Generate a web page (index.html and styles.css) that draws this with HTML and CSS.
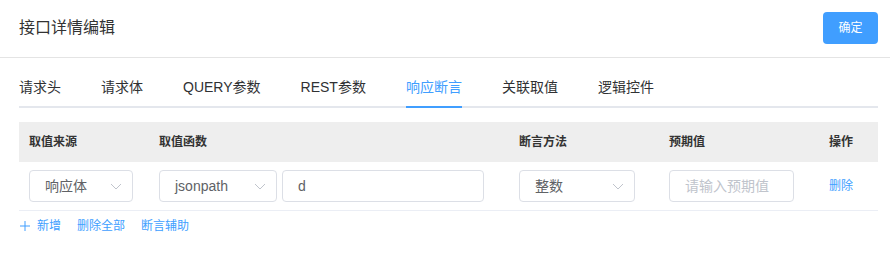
FILE: index.html
```html
<!DOCTYPE html>
<html lang="zh-CN">
<head>
<meta charset="utf-8">
<title>接口详情编辑</title>
<link rel="stylesheet" href="styles.css">
</head>
<body>
<div class="page">
  <header class="topbar">
    <div class="title">接口详情编辑</div>
    <button class="btn-primary">确定</button>
  </header>
  <main class="content">
    <nav class="tabs">
      <span class="tab">请求头</span>
      <span class="tab">请求体</span>
      <span class="tab">QUERY参数</span>
      <span class="tab">REST参数</span>
      <span class="tab active">响应断言</span>
      <span class="tab">关联取值</span>
      <span class="tab">逻辑控件</span>
    </nav>
    <div class="table">
      <div class="thead">
        <div class="th">取值来源</div>
        <div class="th">取值函数</div>
        <div class="th">断言方法</div>
        <div class="th">预期值</div>
        <div class="th">操作</div>
      </div>
      <div class="trow">
        <div class="td">
          <div class="select w104"><span>响应体</span><svg class="chev" viewBox="0 0 12 7" width="12" height="7"><polyline points="1,1 6,6 11,1" fill="none" stroke="#c0c4cc" stroke-width="1"/></svg></div>
        </div>
        <div class="td pair">
          <div class="select w118"><span>jsonpath</span><svg class="chev" viewBox="0 0 12 7" width="12" height="7"><polyline points="1,1 6,6 11,1" fill="none" stroke="#c0c4cc" stroke-width="1"/></svg></div>
          <div class="input w202">d</div>
        </div>
        <div class="td">
          <div class="select w116"><span>整数</span><svg class="chev" viewBox="0 0 12 7" width="12" height="7"><polyline points="1,1 6,6 11,1" fill="none" stroke="#c0c4cc" stroke-width="1"/></svg></div>
        </div>
        <div class="td">
          <div class="input w125 placeholder">请输入预期值</div>
        </div>
        <div class="td">
          <span class="link">删除</span>
        </div>
      </div>
    </div>
    <div class="actions">
      <span class="link"><svg class="plus" viewBox="0 0 12 12" width="12" height="12"><path d="M6 1v10M1 6h10" stroke="#409eff" stroke-width="1" fill="none"/></svg>新增</span>
      <span class="link">删除全部</span>
      <span class="link">断言辅助</span>
    </div>
  </main>
</div>
</body>
</html>
```
FILE: styles.css
```css
* { box-sizing: border-box; }
html, body { margin: 0; padding: 0; background: #fff; }
body {
  font-family: "Liberation Sans", "Noto Sans CJK SC", sans-serif;
  color: #303133;
  width: 890px;
  height: 263px;
  overflow: hidden;
}
.topbar {
  height: 58px;
  border-bottom: 1px solid #e4e4e4;
  display: flex;
  align-items: center;
  justify-content: space-between;
  padding: 0 12px 0 19px;
}
.title {
  font-size: 16px;
  line-height: 20px;
  color: #333;
  margin-top: -2px;
}
.btn-primary {
  width: 55px;
  height: 32px;
  margin-top: -1px;
  border: none;
  border-radius: 4px;
  background: #409eff;
  color: #fff;
  font-family: inherit;
  font-size: 12px;
  line-height: 32px;
  padding: 0;
}
.content {
  padding: 10px 12px 0 19px;
}
.tabs {
  display: flex;
  height: 40px;
  border-bottom: 2px solid #e4e7ed;
  box-sizing: content-box;
  height: 38px;
}
.tab {
  font-size: 14px;
  line-height: 38px;
  height: 40px;
  padding: 0 20px;
  color: #303133;
  white-space: nowrap;
}
.tab:first-child { padding-left: 0; }
.tab:last-child { padding-right: 0; }
.tab.active {
  color: #409eff;
  background: linear-gradient(#409eff, #409eff) no-repeat;
  background-size: calc(100% - 40px) 2px;
  background-position: 20px 38px;
}
.table { margin-top: 14px; }
.thead, .trow {
  display: grid;
  grid-template-columns: 130px 360px 150px 160px 1fr;
}
.thead {
  background: #eeeeee;
  height: 40px;
  align-items: center;
}
.th {
  padding-left: 10px;
  font-size: 12px;
  font-weight: bold;
  color: #333;
  line-height: 16px;
}
.trow {
  border-bottom: 1px solid #ebeef5;
  height: 49px;
  align-items: center;
}
.td {
  padding-left: 10px;
  display: flex;
  align-items: center;
}
.td.pair { gap: 5px; }
.select, .input {
  height: 32px;
  border: 1px solid #dcdfe6;
  border-radius: 4px;
  padding: 0 15px;
  font-size: 14px;
  line-height: 30px;
  color: #606266;
  display: flex;
  align-items: center;
  justify-content: space-between;
  white-space: nowrap;
}
.select .chev { margin-right: -5px; }
.w104 { width: 104px; }
.w118 { width: 118px; }
.w116 { width: 116px; }
.w202 { width: 202px; }
.w125 { width: 125px; }
.placeholder { color: #c0c4cc; }
.link {
  color: #409eff;
  font-size: 12px;
  line-height: 16px;
  display: inline-flex;
  align-items: center;
}
.plus { margin-right: 6px; }
.actions {
  display: flex;
  gap: 16px;
  padding-top: 7px;
  align-items: center;
}
```
